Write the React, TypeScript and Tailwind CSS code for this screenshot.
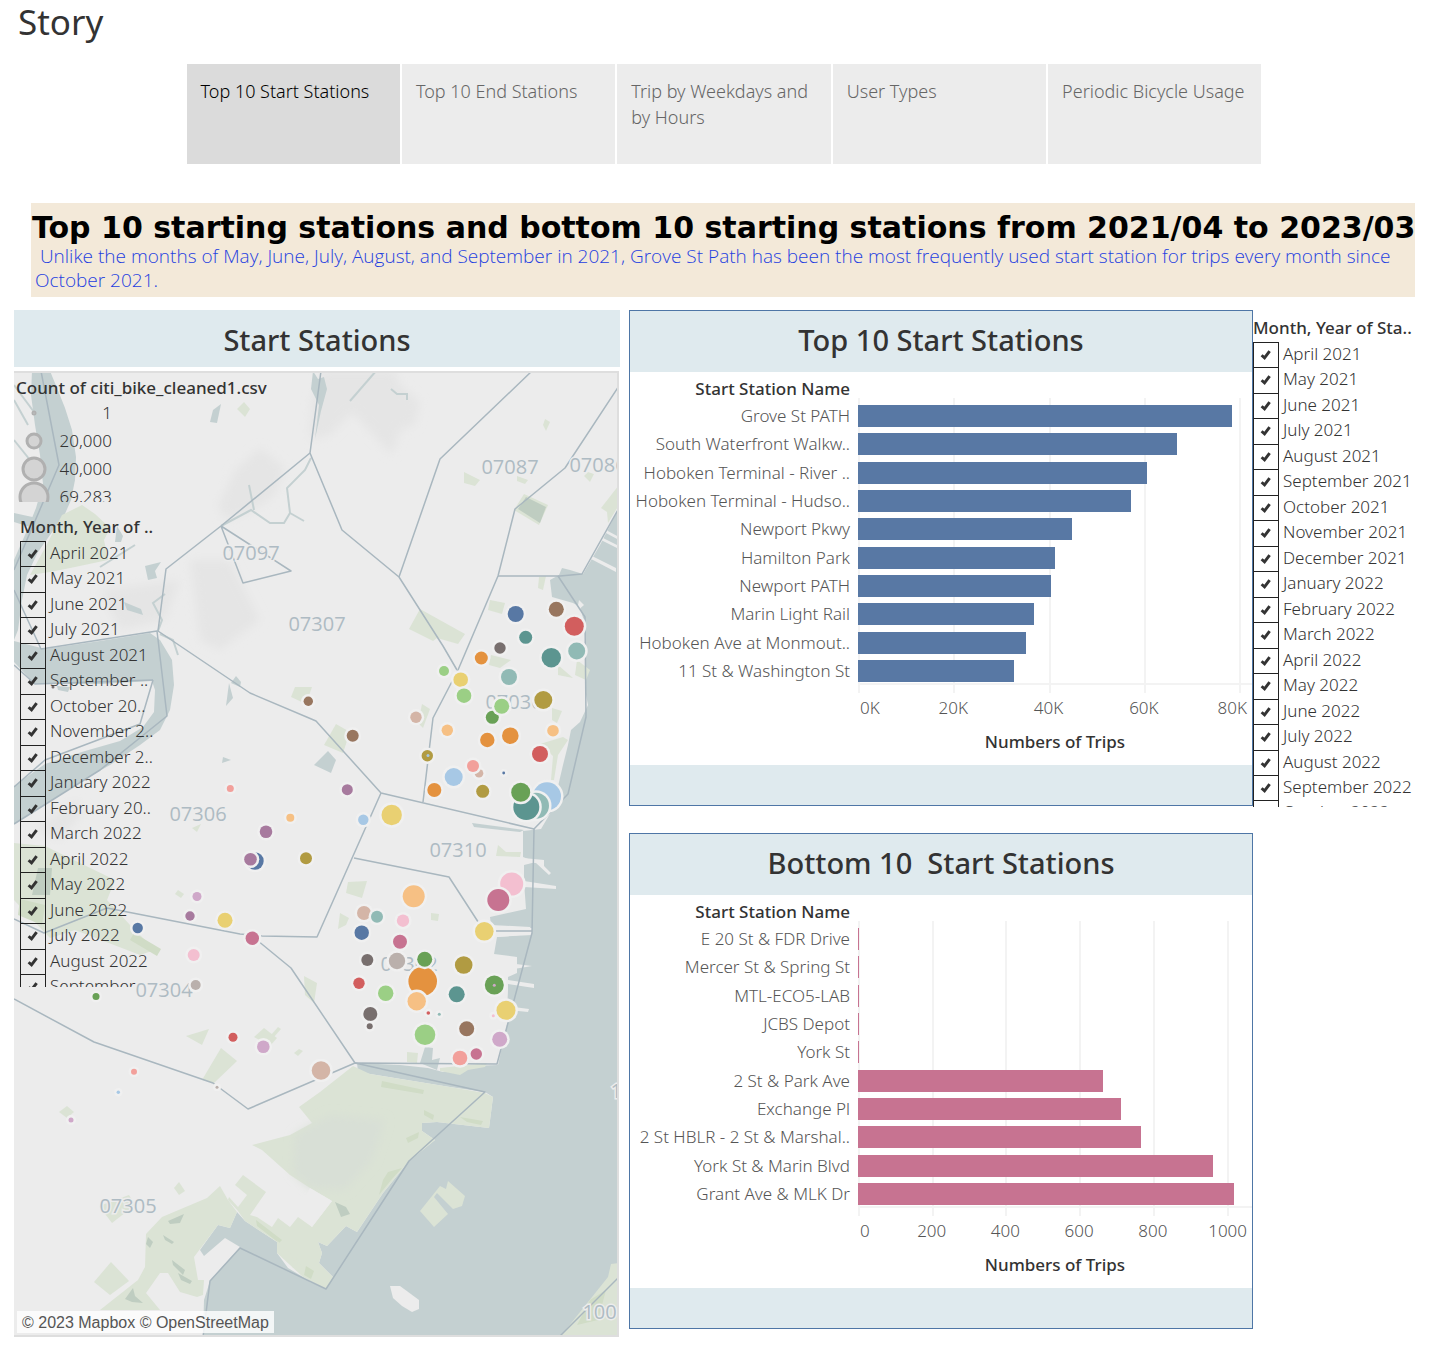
import React from "react";

const COLORS = {
  blue: "#5878a4",
  brown: "#98765f",
  red: "#d25e5e",
  teal: "#5c9590",
  mist: "#91bab5",
  orange: "#e4923f",
  yellow: "#e9d072",
  lime: "#9bcf85",
  green: "#69a156",
  olive: "#b19b42",
  peach: "#f6c084",
  gray: "#786f6e",
  ash: "#bab0ac",
  pink: "#f3bfd0",
  rose: "#c77391",
  purple: "#a77a9e",
  lilac: "#cfa8c9",
  salmon: "#f2a09b",
  sky: "#a7c8e5",
  tan: "#d4b5a7",
};

type Station = [number, number, number, keyof typeof COLORS];

const STATIONS: Station[] = [
  [515.7, 614, 8, "blue"], [556.3, 609.3, 7.5, "brown"], [574.3, 626.3, 9.5, "red"],
  [525.7, 637.3, 6.5, "teal"], [551.3, 657.7, 9.7, "teal"], [576.7, 651, 8.5, "mist"],
  [500, 648, 5.7, "gray"], [481.3, 658, 6.5, "orange"], [444, 671, 5, "lime"],
  [460.7, 679.7, 7.3, "yellow"], [509, 677, 8, "mist"], [464, 695.7, 7.3, "lime"],
  [492.3, 717.3, 6.5, "green"], [501.7, 706.3, 7.5, "lime"], [543.3, 700, 9, "olive"],
  [416, 717.3, 5.7, "tan"], [447.3, 730.3, 5.7, "peach"], [487.3, 740, 7.2, "orange"],
  [510.3, 735.7, 8.3, "orange"], [553, 730.7, 5.8, "peach"], [427.3, 755.7, 5.7, "olive"],
  [428, 755.4, 1.5, "sky"], [540, 754, 8, "red"], [479, 773.3, 4.3, "tan"],
  [473, 766, 6, "salmon"], [453.7, 777, 9, "sky"], [503.7, 773, 1.4, "blue"],
  [434.3, 790, 7, "orange"], [482.7, 791.3, 6.5, "olive"], [547, 796.3, 14, "sky"],
  [536, 805.7, 13, "mist"], [526.3, 807, 13, "teal"], [520.7, 792.3, 9.5, "green"],
  [352.7, 735.7, 6, "brown"], [347.3, 789.7, 5.5, "purple"], [363.3, 819.7, 5.2, "sky"],
  [391.7, 815, 10.2, "yellow"], [308.3, 701.3, 4.7, "brown"], [230.3, 788.5, 3.5, "salmon"],
  [290.3, 817.7, 4, "peach"], [266, 831.7, 6.3, "purple"], [255, 861, 8.7, "blue"],
  [250.5, 859.3, 6.3, "purple"], [306, 858.3, 6, "olive"], [197, 896.5, 4.5, "lilac"],
  [190, 916, 4.7, "purple"], [225, 920.3, 7.5, "yellow"], [137.7, 928, 5.2, "blue"],
  [252.3, 938.3, 6.7, "rose"], [193.7, 955, 6, "pink"], [195.7, 985, 5, "ash"],
  [96, 996.4, 3.5, "green"], [233, 1037.3, 4.5, "red"], [263.3, 1046.7, 6.3, "lilac"],
  [134, 1071.7, 3, "salmon"], [118.3, 1092.3, 1.7, "sky"], [71, 1120, 2.5, "lilac"],
  [217, 1087.3, 1.5, "ash"], [321, 1070.5, 9.3, "tan"], [413.7, 896.3, 11, "peach"],
  [511.7, 884, 11.5, "pink"], [498.3, 900, 11, "rose"], [484.3, 931.3, 9.3, "yellow"],
  [364, 913, 7, "tan"], [377, 916.7, 6, "mist"], [403, 920.7, 6.2, "pink"],
  [361.7, 932.7, 7.2, "blue"], [400, 941.7, 7, "rose"], [367.3, 960, 6, "gray"],
  [397, 961, 8.2, "ash"], [463.7, 965, 8.8, "olive"],
  [359, 983.3, 5.7, "red"], [422.7, 981.3, 14.3, "orange"], [424.7, 959.3, 7.5, "green"],
  [385.7, 993.3, 7.7, "lime"], [416.7, 1001.3, 9.2, "peach"], [456.7, 994.3, 8, "teal"],
  [494.3, 985, 9.5, "green"], [494.3, 985.2, 1.5, "lilac"], [493.3, 1015.7, 1.5, "pink"],
  [506, 1010.3, 9.5, "yellow"], [370.3, 1014, 7, "gray"], [369.7, 1026.3, 3, "gray"],
  [428.3, 1013, 1.8, "red"], [439.3, 1014.3, 1.5, "mist"], [425, 1034.7, 10.3, "lime"],
  [466.7, 1028.7, 7.5, "brown"], [499.7, 1039.3, 7.5, "lilac"], [460, 1058, 7.3, "salmon"],
  [476.3, 1054, 5.7, "rose"],
];

const OVERLAID = new Set(["428,755.4", "494.3,985.2"]);

const WATER = [
  "32,371 50,371 57,388 65,408 72,430 76,457 75,480 71,500 64,516 50,535 38,552 27,575 22,600 18,630 14,640 14,560 28,528 36,508 43,484 40,455 35,425 31,395",
  "14,641 45,649 100,641 150,633 160,640 172,660 174,685 170,710 160,730 140,745 110,765 80,782 14,824 14,786 45,764 85,751 120,741 143,727 154,712 155,690 152,681 100,684 35,684 14,662",
  "619,508 600,545 583,574 570,570 562,568 559,575 550,580 552,597 573,603 580,607 585,625 586,655 585,690 588,705 580,722 571,730 568,745 563,765 556,795 551,812 541,829 523,831 523,857 536,862 524,865 524,882 526,909 490,917 491,925 530,927 532,935 497,937 494,954 517,957 517,973 508,977 508,990 507,1012 508,1020 503,1043 498,1065 470,1066 443,1072 428,1068 400,1065 357,1063 358,1072 450,1087 485,1092 493,1097 489,1128 437,1122 422,1123 422,1131 435,1140 409,1161 383,1193 357,1232 346,1226 327,1246 318,1242 322,1253 319,1263 333,1277 326,1289 310,1282 303,1277 288,1268 277,1253 277,1242 245,1221 237,1212 230,1228 218,1225 200,1250 204,1256 225,1238 240,1247 210,1281 204,1300 203,1337 619,1337",
  "221,404 217,423 210,422 213,410",
  "314,765 328,751 336,760 331,773",
  "229,683 233,698 226,706",
  "231,683 236,676 241,682 240,687",
  "223,757 231,760 222,763",
  "145,566 161,562 155,571 157,578 148,580",
  "124,602 141,609 143,615 127,610",
  "425,1047 433,1048 432,1060 440,1058 437,1070 420,1063",
  "472,823 524,830 520,832 474,827",
  "117,526 123,536 121,542 115,542",
  "10,512 37,518 33,528 14,522",
  "57,686 70,687 68,692 58,690",
];

const PARKS = [
  "62,515 82,505 95,514 110,528 104,540 108,560 75,567 50,572 30,575 45,548",
  "237,409 244,402 250,409 245,417",
  "14,843 45,846 115,880 107,900 130,925 155,950 140,955 75,930 50,938 14,900",
  "252,1145 290,1135 312,1123 299,1107 320,1092 353,1066 370,1074 450,1087 485,1093 493,1097 489,1128 437,1122 422,1123 422,1131 435,1140 409,1161 383,1193 357,1232 346,1226 327,1246 318,1242 322,1253 319,1263 333,1277 326,1289 303,1277 277,1253 277,1242 245,1221 238,1211 228,1200 229,1197 238,1207 247,1195 235,1185 243,1175 266,1192 250,1215 257,1217 272,1227 278,1218 290,1227 298,1217 312,1227 332,1201 310,1188 290,1175 262,1150",
  "228,1200 220,1186 207,1198 162,1217 146,1234 145,1267 138,1280 100,1310 160,1310 146,1293 160,1273 168,1273 180,1292 197,1297 203,1295 204,1280 198,1280 194,1257 218,1225 230,1228 237,1212",
  "94,1282 111,1262 129,1281 110,1295",
  "186,1036 209,1029 202,1045",
  "202,1080 221,1048 237,1061 214,1083",
  "254,1037 264,1028 277,1038 270,1046",
  "271,1035 278,1027 281,1029 274,1037",
  "294,1053 299,1049 303,1051 298,1056",
  "59,1112 67,1106 74,1112 67,1118",
  "174,1188 179,1182 185,1191 179,1195",
  "99,1206 129,1195 135,1205 112,1223",
  "409,629 420,609 465,634 458,644 437,638 433,641",
  "464,472 480,480 475,486 464,483",
  "545,419 550,422 546,431 543,425",
  "517,476 528,480 525,484 517,481",
  "524,494 548,505 539,525 514,510",
  "588,472 594,474 590,482 584,476",
  "619,485 619,505 608,523 607,512 601,508",
  "490,600 505,603 502,614 488,610",
  "539,577 546,576 543,590 538,588",
  "491,655 511,660 500,668 489,665",
  "295,687 312,687 306,704 291,697",
  "336,724 350,732 343,753 324,745",
  "422,704 430,709 423,728 418,723",
  "552,708 562,711 557,723 552,720",
  "558,665 573,678 558,675",
  "577,660 590,670 586,680 575,675",
  "540,744 563,737 568,740 558,755 554,780 551,780 553,756",
  "348,882 367,881 362,898 346,893",
  "340,913 349,918 346,925 338,929",
  "498,845 506,852 521,852 520,857 496,856",
  "431,913 439,914 438,921 431,920",
  "304,976 317,983 314,1003 305,995",
  "407,1052 418,1053 417,1063 407,1062",
  "420,1211 440,1186 446,1189 448,1181 465,1196 462,1206 453,1209 437,1193 434,1197 448,1214 434,1227",
  "619,1263 611,1264 608,1277 560,1337 619,1337",
  "440,1068 487,1063 485,1067 468,1070 460,1075 440,1071",
  "192,828 201,824 197,832",
  "178,890 184,894 181,898 175,894",
];

const DEEP_PARKS = [
  "38,868 52,868 50,895 32,895",
  "526,497 546,507 540,523 518,509",
  "168,1221 184,1214 180,1223 170,1224",
  "172,1260 185,1270 183,1275 173,1265",
  "163,1235 174,1242 172,1244 165,1240",
  "178,1273 192,1281 190,1284 181,1280",
  "125,1299 133,1288 135,1296 143,1303 132,1302",
  "335,1202 346,1207 350,1214 341,1217",
  "148,1237 153,1242 150,1248 146,1244",
];

const MID_PARKS = [
  "382,1081 424,1090 423,1094 381,1087",
  "383,1180 388,1172 402,1168 392,1179 379,1195",
  "424,1110 434,1115 433,1120 424,1115",
  "460,1117 483,1121 481,1125 467,1122",
  "406,1138 419,1132 418,1138 408,1143",
  "256,1220 282,1240 279,1243 257,1226",
  "134,933 161,949 157,956 130,940",
  "20,899 45,905 42,925 18,915",
  "606,1290 598,1320 577,1325 590,1300",
  "306,1266 314,1271 311,1279 304,1275",
];

const HILLS = [
  "322,371 395,371 400,385 420,402 415,425 400,430 392,455 378,440 352,412 330,435 310,440 312,400",
  "260,448 285,468 275,495 250,512 225,520 218,505 235,470",
  "190,560 230,560 260,620 220,650 200,640",
  "100,590 180,580 165,620 120,630",
  "35,830 75,800 85,810 60,840",
];

const BORDERS = [
  "321,371 310,453 342,530 399,577 443,646 457,670",
  "532,371 440,459 399,577",
  "619,386 565,468 515,509 498,576 458,670 433,718 423,802",
  "498,576 560,576 582,574 619,508",
  "558,576 585,617 586,717 568,794 534,829 381,793 316,721 309,718 250,693 158,631 166,569 221,526 310,453",
  "381,793 317,937 262,936 240,934 107,908 44,933 14,919",
  "534,829 532,933 497,1064 355,1063 248,1109 213,1083 94,1042 14,999",
  "354,858 449,877 484,931 532,931",
  "252,936 291,968 355,1063",
  "355,1063 485,1092 409,1161 326,1289 240,1248 210,1281 203,1337",
  "619,1277 559,1337",
  "221,526 243,583 291,571 221,526",
  "41,371 59,465 14,570",
  "14,590 41,649 157,631 167,716 100,770 14,824",
  "153,680 140,724 45,760 14,787",
  "14,665 35,684 153,680",
];

const STREAMS = [
  "376,371 350,401",
  "391,389 397,394 407,394 407,400",
  "221,526 251,510 270,523 284,523 290,513 287,488 305,470 311,458",
  "249,485 254,510",
  "290,513 304,521",
  "158,631 162,620 153,603 165,594",
  "160,634 173,640 178,655",
  "100,567 135,545",
  "14,440 30,460",
  "14,385 34,412",
  "14,400 28,425",
];

const PIERS = [
  "523,858 544,860 544,866 551,873 549,875 536,863 523,862",
  "524,881 556,886 556,889 524,887",
  "532,966 508,963 508,970",
  "508,980 534,984 534,988 508,984",
  "507,1006 529,1009 528,1012 507,1010",
  "497,937 532,934 532,928 497,926",
  "606,530 619,537 619,540 606,533",
  "601,537 619,546 619,549 601,540",
  "592,556 616,568 616,572 591,559",
  "310,1188 332,1201 312,1227 300,1205",
  "390,1286 400,1286 419,1300 419,1309 412,1312 402,1306 393,1298",
  "579,600 584,605 577,611",
];

const MAP_LABELS: [string, number, number][] = [
  ["07087", 510, 474], ["07086", 598, 472], ["07097", 251, 560], ["07307", 317, 631],
  ["07030", 514, 709], ["07306", 198, 821], ["07310", 458, 857], ["07302", 409, 971],
  ["07304", 164, 997], ["07305", 128, 1213], ["10004", 611, 1319], ["10280", 639, 1098],
];

function StationMap() {
  return (
    <svg viewBox="14 371 605 966" className="block w-full" role="img" aria-label="Map of start stations">
      <defs>
        <filter id="soft" x="-20%" y="-20%" width="140%" height="140%">
          <feGaussianBlur stdDeviation="5" />
        </filter>
      </defs>
      <rect x="14" y="371" width="605" height="966" fill="#ececec" />
      {HILLS.map((p) => <polygon key={p} points={p} fill="#e5e5e5" filter="url(#soft)" />)}
      {WATER.map((p) => <polygon key={p} points={p} fill="#c4d0d1" />)}
      {PARKS.map((p) => <polygon key={p} points={p} fill="#dbe3d5" />)}
      <polygon points="295,1135 330,1115 385,1120 372,1160 345,1190 310,1188 293,1172" fill="#d8dfd6" filter="url(#soft)" />
      {MID_PARKS.map((p) => <polygon key={p} points={p} fill="#d0dcc6" />)}
      {DEEP_PARKS.map((p) => <polygon key={p} points={p} fill="#bfcdc1" />)}
      {PIERS.map((p) => <polygon key={p} points={p} fill="#ececec" />)}
      <path d="M313 371l5 8 6-2 3 12-6 22-6 28 4-34-8-16z" fill="#c4d0d1" />
      <path d="M277 1240l10 12-4 6zM288 1250l8 14-3 4zM296 1256l6 12-3 4z" fill="#dbe3d5" />
      {STREAMS.map((p) => <polyline key={p} points={p} fill="none" stroke="#c4d0d1" strokeWidth="2" />)}
      {BORDERS.map((p) => <polyline key={p} points={p} fill="none" stroke="#a9b7bf" strokeWidth="1.5" strokeLinejoin="round" />)}
      {MAP_LABELS.map(([label, x, y]) => (
        <text key={label} x={x} y={y} textAnchor="middle" fontSize="20" fill="#aebbc3" stroke="#ececec" strokeWidth="3" paintOrder="stroke" fontFamily="'Open Sans'">
          {label}
        </text>
      ))}
      <circle cx="53" cy="687" r="1.5" fill="#786f6e" />
      {STATIONS.map(([x, y, r, c]) => (
        <g key={`${x},${y}`}>
          {!OVERLAID.has(`${x},${y}`) && <circle cx={x} cy={y} r={r + 2.5} fill="#f0f0f0" />}
          <circle cx={x} cy={y} r={r} fill={COLORS[c]} />
        </g>
      ))}
      <path d="M14 372h605M14 1336h605M618 371v966" stroke="#dedede" strokeWidth="2" fill="none" />
    </svg>
  );
}

function MonthFilter({ title, months, id, height }: { title: string; months: string[]; id: string; height: string }) {
  return (
    <fieldset className={`min-w-0 overflow-hidden ${height}`}>
      <legend className="h-[27px] text-[17px] leading-[26px] font-medium whitespace-nowrap text-[#333]">{title}</legend>
      <ul className="flex h-[484px] flex-col">
        {months.map((m, i) => (
          <li key={i} className="min-h-0 flex-1">
            <label htmlFor={`${id}-${i}`} className="flex h-full gap-1 text-[17px] leading-6 font-light whitespace-nowrap text-[#333]">
              <span className="grid h-full w-[26px] shrink-0">
                <input
                  id={`${id}-${i}`}
                  type="checkbox"
                  defaultChecked
                  className="peer col-start-1 row-start-1 h-full w-full appearance-none border-x border-t border-[#222]"
                />
                <svg viewBox="0 0 26 26" className="pointer-events-none invisible col-start-1 row-start-1 h-full w-full peer-checked:visible" aria-hidden="true">
                  <path d="M8.500 13.500l3 2.700L16.700 9.200" fill="none" stroke="#333" strokeWidth="3" />
                </svg>
              </span>
              {m}
            </label>
          </li>
        ))}
      </ul>
    </fieldset>
  );
}

type Row = [string, number];

interface ChartProps {
  title: string;
  rows: Row[];
  max: number;
  ticks: [number, string][];
  fill: string;
}

function BarChart({ title, rows, max, ticks, fill }: ChartProps) {
  return (
    <section className="border border-[#4e76a6]">
      <h2 className="flex h-[61px] items-center justify-center bg-[#dfeaee] pb-1 text-[29px] leading-9 font-medium whitespace-pre text-[#333]">{title}</h2>
      <div className="grid grid-cols-[228px_1fr] pt-[5px]">
        <h3 className="h-[25px] pr-2 text-right text-[17px] leading-6 font-medium text-[#333]">Start Station Name</h3>
        <div />
        <ul className="flex h-[283px] flex-col pr-2">
          {rows.map(([name]) => (
            <li key={name} className="flex min-h-0 flex-1 items-center justify-end text-[17px] leading-6 font-light whitespace-nowrap text-[#555]">{name}</li>
          ))}
        </ul>
        <div className="relative h-[283px]">
          <div className="absolute inset-x-0 bottom-0 h-[2px] bg-[#f3f3f3]" />
          {ticks.map(([v]) => (
            <div key={v} className="absolute -top-1 -bottom-2 w-[2px] bg-[#f3f3f3]" style={{ left: `${(v / max) * 100}%` }} />
          ))}
          <ul className="relative flex h-full flex-col">
            {rows.map(([name, v]) => (
              <li key={name} className="flex min-h-0 flex-1 items-center">
                <span className={`h-[22px] min-w-px ${fill}`} style={{ width: `${(v / max) * 100}%` }} />
              </li>
            ))}
          </ul>
        </div>
        <div />
        <div className="relative h-[45px] text-[17px] leading-6 font-light text-[#555]">
          {ticks.map(([v, label], i) => (
            <span
              key={v}
              className={`absolute top-[11px] ${i === 0 ? "" : i === ticks.length - 1 ? "right-[5px]" : "-translate-x-1/2"}`}
              style={i === ticks.length - 1 ? undefined : { left: i === 0 ? "2px" : `${(v / max) * 100}%` }}
            >
              {label}
            </span>
          ))}
        </div>
        <div />
        <p className="h-[35px] text-center text-[17px] leading-6 font-medium text-[#333]">Numbers of Trips</p>
      </div>
      <div className="h-10 bg-[#dfeaee]" />
    </section>
  );
}

const TOP_ROWS: Row[] = [
  ["Grove St PATH", 78500], ["South Waterfront Walkw..", 67000], ["Hoboken Terminal - River ..", 60700],
  ["Hoboken Terminal - Hudso..", 57300], ["Newport Pkwy", 44900], ["Hamilton Park", 41400],
  ["Newport PATH", 40500], ["Marin Light Rail", 37000], ["Hoboken Ave at Monmout..", 35300],
  ["11 St & Washington St", 32700],
];

const BOTTOM_ROWS: Row[] = [
  ["E 20 St & FDR Drive", 1], ["Mercer St & Spring St", 1], ["MTL-ECO5-LAB", 1], ["JCBS Depot", 1], ["York St", 1],
  ["2 St & Park Ave", 664], ["Exchange Pl", 713], ["2 St HBLR - 2 St & Marshal..", 767],
  ["York St & Marin Blvd", 962], ["Grant Ave & MLK Dr", 1021],
];

const MONTHS = [
  "April 2021", "May 2021", "June 2021", "July 2021", "August 2021", "September 2021", "October 2021",
  "November 2021", "December 2021", "January 2022", "February 2022", "March 2022", "April 2022", "May 2022",
  "June 2022", "July 2022", "August 2022", "September 2022", "October 2022",
];

const SHORT_MONTHS = [
  "April 2021", "May 2021", "June 2021", "July 2021", "August 2021", "September ..", "October 20..",
  "November 2..", "December 2..", "January 2022", "February 20..", "March 2022", "April 2022", "May 2022",
  "June 2022", "July 2022", "August 2022", "September", "October 20..",
];

const TABS = ["Top 10 Start Stations", "Top 10 End Stations", "Trip by Weekdays and by Hours", "User Types", "Periodic Bicycle Usage"];

const SIZES: [string, number][] = [["1", 2], ["20,000", 8], ["40,000", 12], ["69,283", 15]];

export default function App() {
  return (
    <main className="min-h-screen bg-white pb-[15px] font-['Noto_Sans','Open_Sans',sans-serif]">
      <h1 className="h-16 pt-1 pl-[18px] text-[35px] leading-9 text-[#333]">Story</h1>

      <nav className="mx-auto grid max-w-[1075px] translate-x-px grid-cols-5 gap-[2px]" aria-label="Story points">
        {TABS.map((t, i) => (
          <button
            key={t}
            type="button"
            className={`flex h-[100px] items-start pt-3.5 pr-3 pl-3.5 text-left text-[18px] leading-[26px] font-light ${i === 0 ? "bg-[#dbdbdb] text-black" : "bg-[#ececec] text-[#666]"}`}
          >
            {t}
          </button>
        ))}
      </nav>

      <header className="mx-[31px] mt-[39px] h-[94px] bg-[#f3e9d9] px-px pt-2">
        <h2 className="font-['DejaVu_Sans',sans-serif] text-[30px] leading-[33px] font-bold whitespace-nowrap text-black">
          Top 10 starting stations and bottom 10 starting stations from 2021/04 to 2023/03
        </h2>
        <p className="pr-4 pl-[3px] font-['Open_Sans',sans-serif] text-[19px] leading-6 font-light whitespace-pre-wrap text-[#1f3fe0]">
          {" Unlike the months of May, June, July, August, and September in 2021, Grove St Path has been the most frequently used start station for trips every month since October 2021."}
        </p>
      </header>

      <div className="mt-[13px] ml-[14px] grid grid-cols-[606fr_633fr_193fr] items-start">
        <section>
          <h2 className="flex h-[57px] items-center justify-center bg-[#dfeaee] pt-0.5 text-[29px] leading-9 font-medium text-[#333]">Start Stations</h2>
          <div className="relative mt-1 mr-px overflow-hidden">
            <StationMap />
            <div className="absolute top-[5px] left-[2px] h-[126px] overflow-hidden">
              <h3 className="h-[23px] text-[17px] leading-6 font-medium whitespace-nowrap text-[#333]">Count of citi_bike_cleaned1.csv</h3>
              <ul>
                {SIZES.map(([label, r]) => (
                  <li key={label} className="flex h-7 w-[96px] items-center justify-between text-[17px] leading-6 font-light text-[#333]">
                    <svg viewBox="-18 -18 36 36" className="h-9 w-9 shrink-0" aria-hidden="true">
                      <circle r={r - 1} fill="#d4d4d4" stroke="#b0b0b0" strokeWidth="3" />
                    </svg>
                    {label}
                  </li>
                ))}
              </ul>
            </div>
            <div className="absolute top-[143px] left-[6px]">
              <MonthFilter id="map-month" title="Month, Year of .." months={SHORT_MONTHS} height="h-[473px]" />
            </div>
            <p className="absolute bottom-1 left-[3px] bg-white/80 px-[5px] pt-0.5 font-['Liberation_Sans',sans-serif] text-base leading-5 text-[#555]">
              © 2023 Mapbox © OpenStreetMap
            </p>
          </div>
        </section>

        <div className="flex flex-col gap-[27px] pl-[9px]">
          <BarChart
            title="Top 10 Start Stations"
            rows={TOP_ROWS}
            max={82700}
            ticks={[[0, "0K"], [20000, "20K"], [40000, "40K"], [60000, "60K"], [80000, "80K"]]}
            fill="bg-[#5878a4]"
          />
          <BarChart
            title="Bottom 10  Start Stations"
            rows={BOTTOM_ROWS}
            max={1069}
            ticks={[[0, "0"], [200, "200"], [400, "400"], [600, "600"], [800, "800"], [1000, "1000"]]}
            fill="bg-[#c77391]"
          />
        </div>

        <div className="pt-[5px]">
          <MonthFilter id="chart-month" title="Month, Year of Sta.." months={MONTHS} height="h-[492px]" />
        </div>
      </div>
    </main>
  );
}
